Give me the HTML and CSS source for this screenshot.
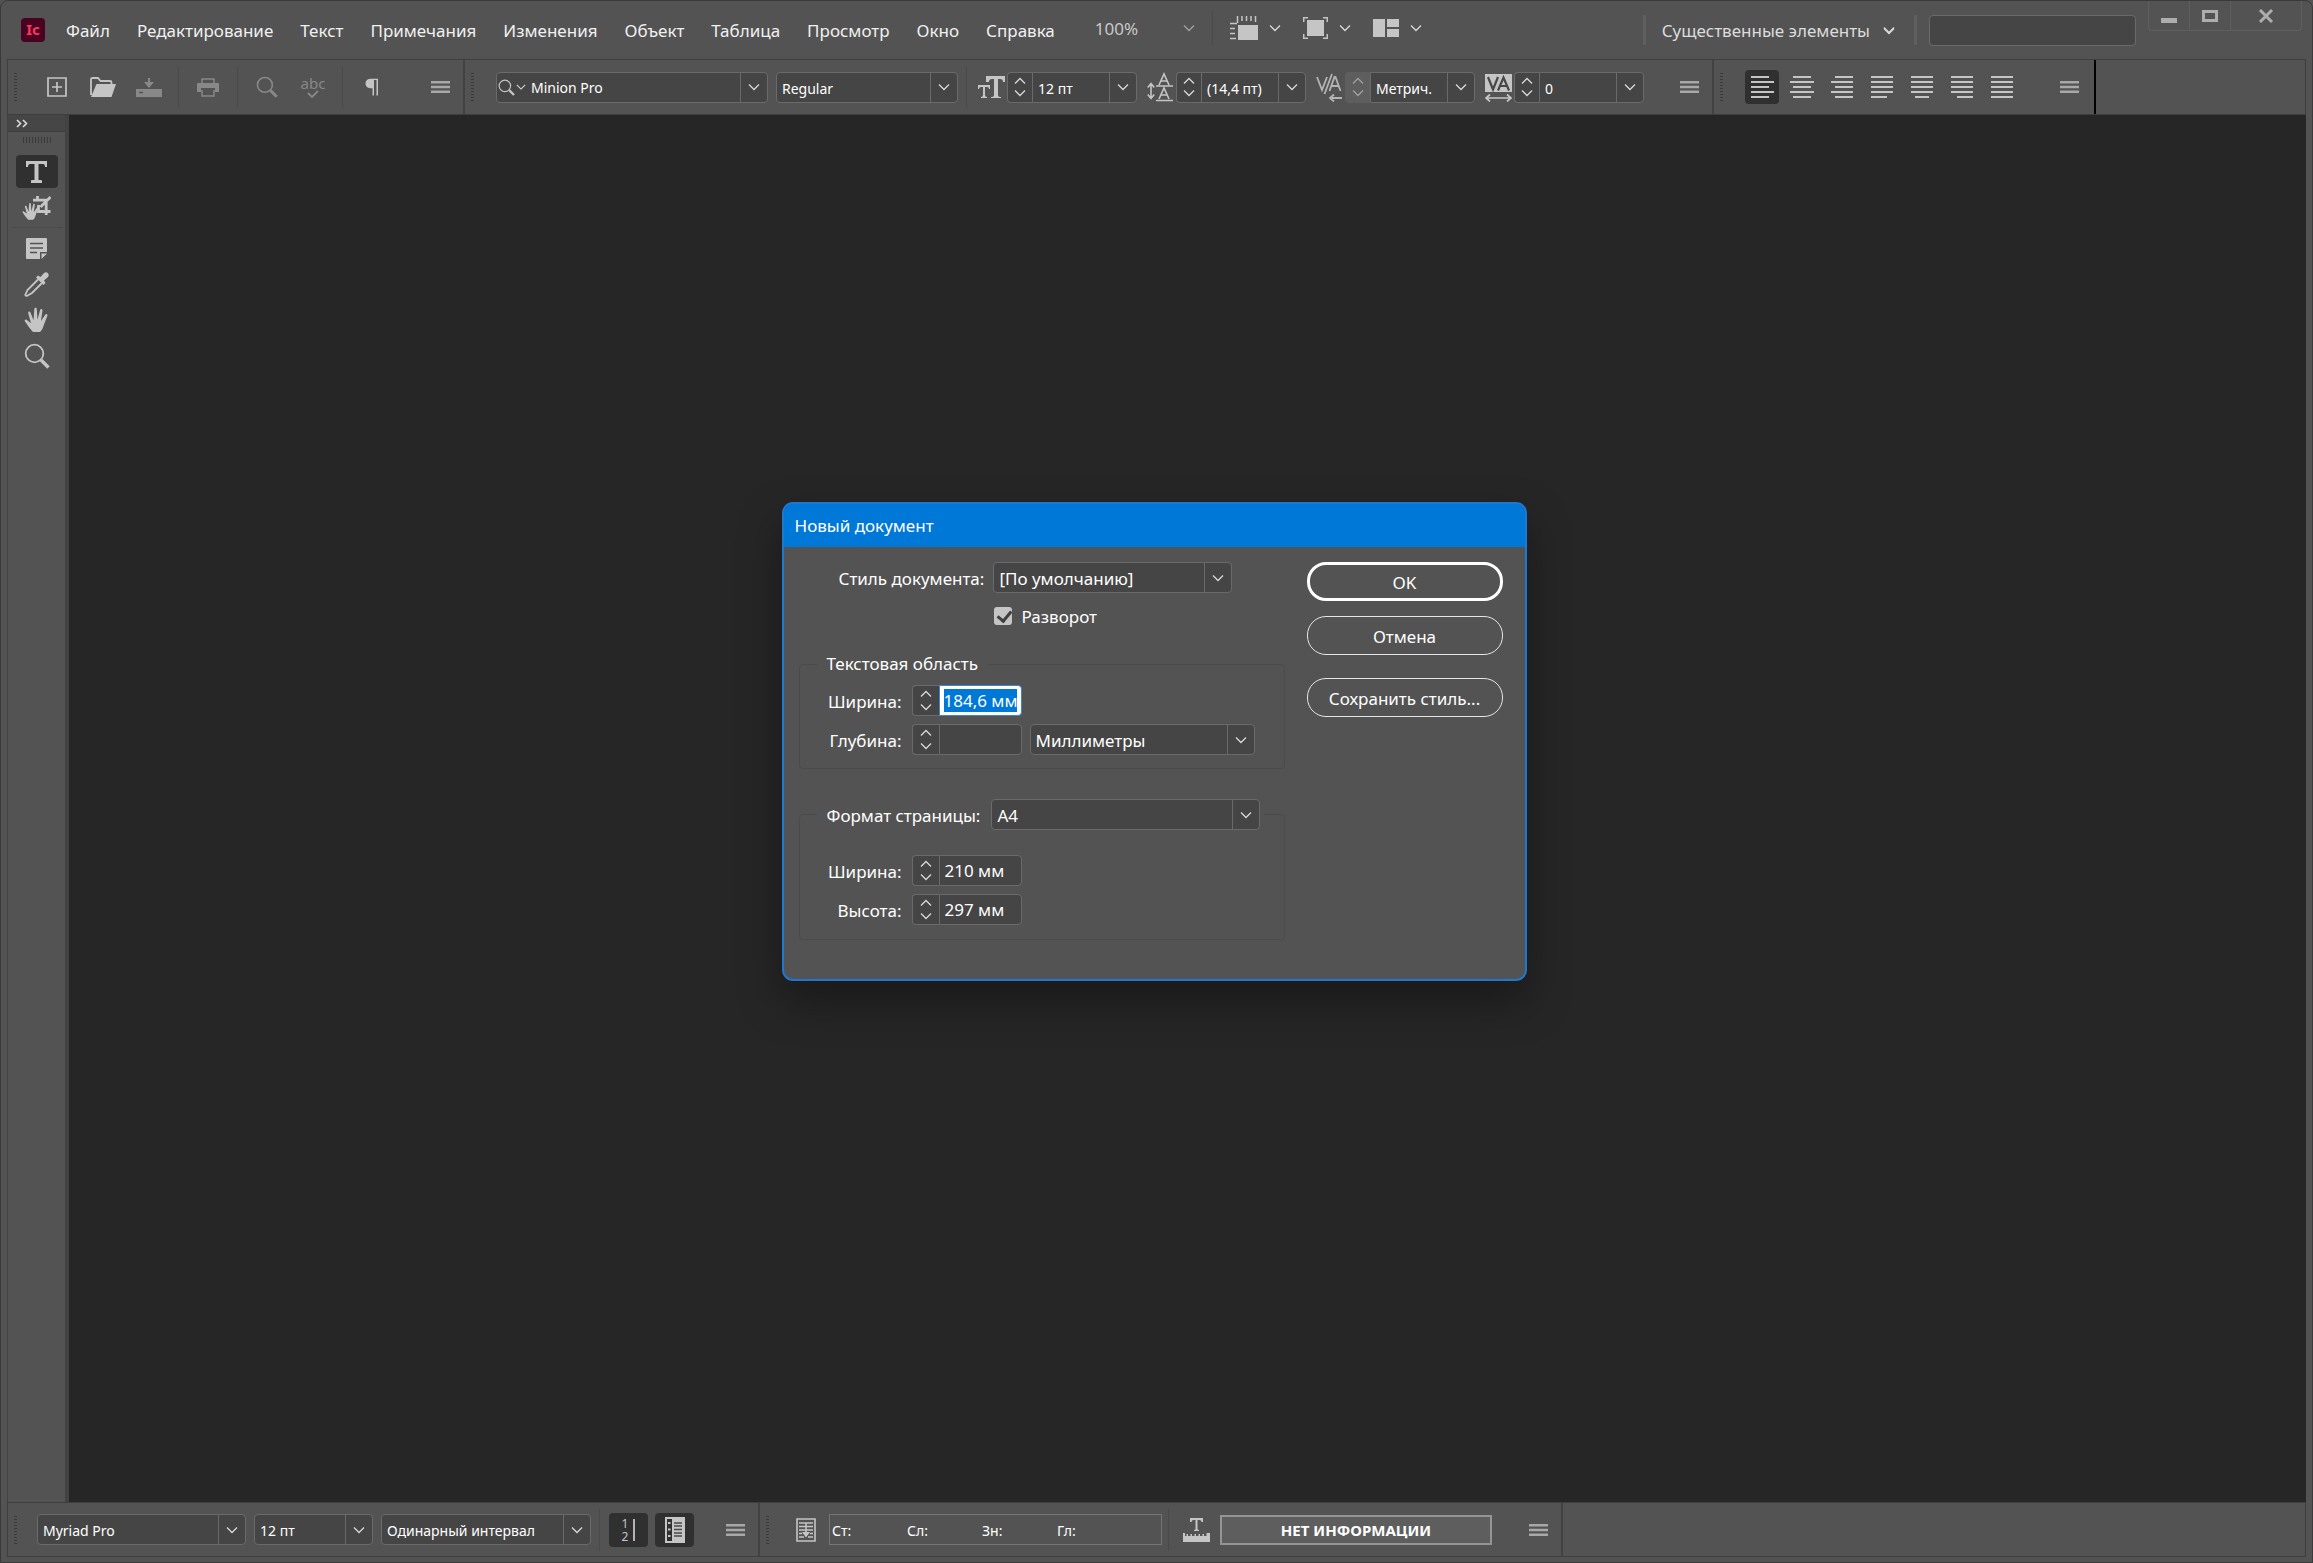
FILE: index.html
```
<!DOCTYPE html>
<html lang="ru">
<head>
    <meta charset="UTF-8">
    <meta name="viewport" content="width=device-width, initial-scale=1.0">
    <title>Новый документ</title>
    <link rel="stylesheet" href="styles.css">
</head>
<body>

    <!-- Общие значки -->
    <svg class="sprite" aria-hidden="true">
        <symbol id="down" viewBox="0 0 12 8"><path d="M1 1.5l5 5 5-5" fill="none" stroke="currentColor" stroke-width="1.3"/></symbol>
        <symbol id="up" viewBox="0 0 12 8"><path d="M1 6.5l5-5 5 5" fill="none" stroke="currentColor" stroke-width="1.3"/></symbol>
        <symbol id="lines" viewBox="0 0 20 14"><path d="M0 2h20M0 7h20M0 12h20" stroke="currentColor" stroke-width="2.4"/></symbol>
        <symbol id="zoom" viewBox="0 0 26 26"><circle cx="10.5" cy="10.5" r="8.8" fill="none" stroke="currentColor" stroke-width="1.8"/><path d="M17 17l7.5 7.5" stroke="currentColor" stroke-width="3.4"/></symbol>
        <symbol id="hand" viewBox="0 0 26 26"><path d="M9 25C6.500 22.500 3.500 18 1 14.500c-.9-1.400.6-2.500 1.900-1.500L7 16.200 4.200 6.200c-.4-1.700 1.700-2.300 2.300-.7l3 7.700L10.300 2.200c.1-1.800 2.400-1.800 2.500 0l.7 10.600 2.600-9.900c.5-1.700 2.700-1.100 2.400.6L17 14l4.200-6.200c1-1.500 2.900-.3 2.100 1.300L19.800 18c-.8 3-1.800 5.300-3.800 7z" fill="currentColor"/></symbol>
    </svg>

    <div class="app">
        <header class="menubar">
            <svg class="logo" viewBox="0 0 24 24"><rect width="24" height="24" rx="4" fill="#49021f"/><text x="12" y="17" text-anchor="middle">Ic</text></svg>
            <nav class="menu">
                <a href="#">Файл</a>
                <a href="#">Редактирование</a>
                <a href="#">Текст</a>
                <a href="#">Примечания</a>
                <a href="#">Изменения</a>
                <a href="#">Объект</a>
                <a href="#">Таблица</a>
                <a href="#">Просмотр</a>
                <a href="#">Окно</a>
                <a href="#">Справка</a>
            </nav>
            <div class="view-tools">
                <button class="zoom-level">100% <svg class="chevron"><use href="#down"/></svg></button>
                <span class="sep"></span>
                <button class="view-btn" aria-label="Линейки">
                    <svg width="28" height="24" viewBox="0 0 28 24"><path d="M8 9h20v15H8z" fill="#c5c5c5"/><path d="M7.500 0v7M12 0v5M16.500 0v5M21 0v5M25.500 0v6M0 7.500h7M0 12.500h5M0 17.500h5M0 22.500h6" stroke="#c5c5c5" stroke-width="1.5"/></svg>
                    <svg class="chevron"><use href="#down"/></svg>
                </button>
                <button class="view-btn" aria-label="Режим экрана">
                    <svg width="25" height="22" viewBox="0 0 25 22"><path d="M4 3h17v16H4z" fill="#c5c5c5"/><path d="M.7 5V.7H5M20 .7h4.300V5M.7 17v4.300H5M20 21.300h4.300V17" fill="none" stroke="#c5c5c5" stroke-width="1.5"/></svg>
                    <svg class="chevron"><use href="#down"/></svg>
                </button>
                <button class="view-btn" aria-label="Упорядочить документы">
                    <svg width="26" height="18" viewBox="0 0 26 18"><path d="M0 0h12v18H0zM14 0h12v8H14zM14 10h12v8H14z" fill="#c5c5c5"/></svg>
                    <svg class="chevron"><use href="#down"/></svg>
                </button>
            </div>
            <div class="workspace">
                <span class="bar"></span>
                <button class="workspace-btn">Существенные элементы <svg class="chevron bold"><use href="#down"/></svg></button>
                <span class="bar"></span>
                <input class="search" type="text" aria-label="Поиск">
            </div>
            <div class="window-buttons">
                <button aria-label="Свернуть"><svg width="16" height="14"><path d="M0 9h16v5H0z" fill="#adadad"/></svg></button>
                <button aria-label="Развернуть"><svg width="16" height="14"><path d="M1.500 2.500h13v9h-13z" fill="none" stroke="#adadad" stroke-width="3"/></svg></button>
                <button class="close" aria-label="Закрыть"><svg width="16" height="14"><path d="M2 1l12 12M14 1L2 13" stroke="#adadad" stroke-width="3"/></svg></button>
            </div>
        </header>

        <!-- Панель управления -->
        <div class="toolbar">
            <div class="group">
                <span class="grip"></span>
                <button class="tool" aria-label="Новый"><svg width="20" height="20" viewBox="0 0 20 20"><path d="M1 1h18v18H1zM10 5v10M5 10h10" fill="none" stroke="#c5c5c5" stroke-width="1.700"/></svg></button>
                <button class="tool" aria-label="Открыть"><svg width="26" height="20" viewBox="0 0 26 20"><path d="M1 18V2.500Q1 1 2.500 1H8l2.500 3H20q1.500 0 1.500 1.500V7" fill="none" stroke="#c5c5c5" stroke-width="1.800"/><path d="M6.500 7H26l-4.500 13H1z" fill="#c5c5c5"/></svg></button>
                <button class="tool dim" aria-label="Сохранить"><svg width="26" height="19" viewBox="0 0 26 19"><path d="M0 11h26v8H0zM12 0h2v4h4l-5 6-5-6h4z" fill="currentColor"/><path d="M3 14.500h4" stroke="#535353" stroke-width="1.500"/></svg></button>
                <span class="sep"></span>
                <button class="tool dim" aria-label="Печать"><svg width="22" height="19" viewBox="0 0 22 19"><path d="M5 6V1h12v5M5 12v6h12v-6" fill="none" stroke="currentColor" stroke-width="1.500"/><path d="M1 5h20q1 0 1 1v8h-4v-4H4v4H0V6q0-1 1-1z" fill="currentColor"/></svg></button>
                <span class="sep"></span>
                <button class="tool dim" aria-label="Найти"><svg width="22" height="22"><use href="#zoom"/></svg></button>
                <button class="tool dim spell" aria-label="Проверка орфографии"><span>abc</span><svg width="12" height="8" viewBox="0 0 12 8"><path d="M1 3l4 4 6-6" fill="none" stroke="currentColor" stroke-width="1.800"/></svg></button>
                <span class="sep"></span>
                <button class="tool" aria-label="Непечатаемые символы"><svg width="14" height="18" viewBox="0 0 14 18"><path d="M13 17.500V.8H6C2.500.8.500 2.500.500 5.500s2 4.700 5.500 4.700h1.500v7.300H9V2h2.500v15.500z" fill="#c5c5c5"/></svg></button>
                <button class="tool last" aria-label="Меню"><svg width="19" height="14"><use href="#lines"/></svg></button>
            </div>

            <div class="group">
                <span class="grip"></span>
                <span class="combo font-family">
                    <svg class="find" width="17" height="19"><use href="#zoom"/></svg><svg class="chevron small"><use href="#down"/></svg>
                    <select aria-label="Шрифт"><option>Minion Pro</option></select>
                    <span class="arrow"><svg class="chevron"><use href="#down"/></svg></span>
                </span>
                <span class="combo font-style">
                    <select aria-label="Начертание"><option>Regular</option></select>
                    <span class="arrow"><svg class="chevron"><use href="#down"/></svg></span>
                </span>
                <span class="sep"></span>
                <div class="metrics">
                    <div class="metric">
                        <svg width="27" height="30" viewBox="0 0 27 30"><g fill="#c5c5c5"><path d="M8 4h19v6h-2q0-3-3-3h-2v16q0 2 3 2v1H13v-1q3 0 3-2V7h-2q-3 0-3 3H8z"/><path d="M0 13h12v4h-1q0-2-2-2H7v8q0 2 2 2v1H3v-1q2 0 2-2v-8H3q-2 0-2 2H0z"/></g></svg>
                        <span class="spin"><button aria-label="Больше"><svg class="chevron"><use href="#up"/></svg></button><button aria-label="Меньше"><svg class="chevron"><use href="#down"/></svg></button></span><span class="combo joined">
                            <select aria-label="Кегль"><option>12 пт</option></select>
                            <span class="arrow"><svg class="chevron"><use href="#down"/></svg></span>
                        </span>
                    </div>
                    <div class="metric">
                        <svg width="27" height="30" viewBox="0 0 27 30"><path d="M9 14h17M9 28.500h17M12 13l5-11 5 11M13.500 9h7M12 27l5-11 5 11M13.500 23h7M4 12v14M.8 15.500L4 11.500l3.200 4M.8 22.500L4 26.500l3.200-4" fill="none" stroke="#c5c5c5" stroke-width="1.600"/></svg>
                        <span class="spin"><button aria-label="Больше"><svg class="chevron"><use href="#up"/></svg></button><button aria-label="Меньше"><svg class="chevron"><use href="#down"/></svg></button></span><span class="combo joined">
                            <select aria-label="Интерлиньяж"><option>(14,4 пт)</option></select>
                            <span class="arrow"><svg class="chevron"><use href="#down"/></svg></span>
                        </span>
                    </div>
                    <div class="metric">
                        <svg width="27" height="30" viewBox="0 0 27 30"><path d="M1 5l5 13 5-13M8.500 22L16 2M13.500 19l5-14h1l5 14M15.500 14h7M14 26h12M18 22.500L14 26l4 3.500" fill="none" stroke="#b4b4b4" stroke-width="1.800"/></svg>
                        <span class="spin off"><button aria-label="Больше"><svg class="chevron"><use href="#up"/></svg></button><button aria-label="Меньше"><svg class="chevron"><use href="#down"/></svg></button></span><span class="combo joined">
                            <select aria-label="Кернинг"><option>Метрич.</option></select>
                            <span class="arrow"><svg class="chevron"><use href="#down"/></svg></span>
                        </span>
                    </div>
                    <div class="metric">
                        <svg width="27" height="30" viewBox="0 0 27 30"><path d="M0 2h27v18H0z" fill="#c5c5c5"/><path d="M3 5l5 12.500L13 5M13 18.500l5.500-13 5.500 13M15 14h7" fill="none" stroke="#484848" stroke-width="2.200"/><path d="M1 26h25M5 22.500L1 26l4 3.500M22 22.500l4 3.500-4 3.500" fill="none" stroke="#c5c5c5" stroke-width="1.700"/></svg>
                        <span class="spin"><button aria-label="Больше"><svg class="chevron"><use href="#up"/></svg></button><button aria-label="Меньше"><svg class="chevron"><use href="#down"/></svg></button></span><span class="combo joined">
                            <select aria-label="Трекинг"><option>0</option></select>
                            <span class="arrow"><svg class="chevron"><use href="#down"/></svg></span>
                        </span>
                    </div>
                </div>
                <button class="tool last" aria-label="Меню"><svg width="19" height="14"><use href="#lines"/></svg></button>
            </div>

            <div class="group align-group">
                <span class="grip"></span>
                <div class="align">
                    <button class="active" aria-label="По левому краю"><svg width="24" height="24" viewBox="0 0 24 24"><path d="M1 2h18M1 7h23M1 12h18M1 17h23M1 22h18"/></svg></button>
                    <button aria-label="По центру"><svg width="24" height="24" viewBox="0 0 24 24"><path d="M3 2h18M0 7h24M3 12h18M0 17h24M3 22h18"/></svg></button>
                    <button aria-label="По правому краю"><svg width="24" height="24" viewBox="0 0 24 24"><path d="M5 2h18M1 7h22M5 12h18M1 17h22M5 22h18"/></svg></button>
                    <button aria-label="По ширине, последняя влево"><svg width="24" height="24" viewBox="0 0 24 24"><path d="M1 2h22M1 7h22M1 12h22M1 17h22M1 22h16"/></svg></button>
                    <button aria-label="По ширине, последняя по центру"><svg width="24" height="24" viewBox="0 0 24 24"><path d="M1 2h22M1 7h22M1 12h22M1 17h22M5 22h14"/></svg></button>
                    <button aria-label="По ширине, последняя вправо"><svg width="24" height="24" viewBox="0 0 24 24"><path d="M1 2h22M1 7h22M1 12h22M1 17h22M7 22h16"/></svg></button>
                    <button aria-label="По ширине"><svg width="24" height="24" viewBox="0 0 24 24"><path d="M1 2h22M1 7h22M1 12h22M1 17h22M1 22h22"/></svg></button>
                </div>
                <button class="tool last" aria-label="Меню"><svg width="19" height="14"><use href="#lines"/></svg></button>
            </div>
        </div>

        <div class="workarea">
            <aside class="sidebar">
                <button class="expand" aria-label="Развернуть панель"><svg width="12" height="9" viewBox="0 0 12 9"><path d="M1 1l3.500 3.500L1 8M7 1l3.500 3.500L7 8" fill="none" stroke="#dcdcdc" stroke-width="1.600"/></svg></button>
                <span class="grip-h"></span>
                <button class="side-tool active" aria-label="Текст"><svg width="21" height="22" viewBox="0 0 21 22"><path d="M0 0h21v6h-2q0-3-2-3h-4.500v16H15q1 0 1 1v2H5v-2q0-1 1-1h2.500V3H4Q2 3 2 6H0z" fill="#c5c5c5"/></svg></button>
                <button class="side-tool" aria-label="Монтажная область"><svg width="29" height="25" viewBox="0 0 29 25"><g fill="none" stroke="#c5c5c5" stroke-width="2.800"><path d="M15.500 0v5M11 4.200h13.200V19M16.500 9v6.500h12M28.500 1l-10 10" /></g><svg x="0" y="6" width="18" height="19"><use href="#hand"/></svg></svg></button>
                <span class="side-sep"></span>
                <button class="side-tool" aria-label="Примечание"><svg width="21" height="21" viewBox="0 0 21 21"><path d="M1 0h19q1 0 1 1v13h-7v7H1q-1 0-1-1V1q0-1 1-1zM15.500 15.500H21L15.500 21z" fill="#c5c5c5"/><path d="M4 5.500h13M4 10h13M4 14.500h7" stroke="#535353" stroke-width="1.600"/></svg></button>
                <button class="side-tool" aria-label="Пипетка"><svg width="25" height="25" viewBox="0 0 25 25"><path d="M14 7.500L3.500 18 1.300 23q.7 1.200 2 .7L8 21 18 11" fill="none" stroke="#c5c5c5" stroke-width="1.800"/><path d="M12 5.500l2-2 2.500 1.500 3.500-4q2-1.500 3.800 0 1.600 2 .2 4L20 8.500l1.500 2.500-2 2z" fill="#c5c5c5"/></svg></button>
                <button class="side-tool" aria-label="Рука"><svg width="26" height="26"><use href="#hand"/></svg></button>
                <button class="side-tool" aria-label="Масштаб"><svg width="26" height="26"><use href="#zoom"/></svg></button>
            </aside>
            <main class="canvas"></main>
        </div>

        <!-- Нижняя панель -->
        <footer class="toolbar bottom">
            <div class="group">
                <span class="grip"></span>
                <span class="combo galley-font">
                    <select aria-label="Шрифт гранок"><option>Myriad Pro</option></select>
                    <span class="arrow"><svg class="chevron"><use href="#down"/></svg></span>
                </span>
                <span class="combo galley-size">
                    <select aria-label="Кегль гранок"><option>12 пт</option></select>
                    <span class="arrow"><svg class="chevron"><use href="#down"/></svg></span>
                </span>
                <span class="combo galley-leading">
                    <select aria-label="Интервал"><option>Одинарный интервал</option></select>
                    <span class="arrow"><svg class="chevron"><use href="#down"/></svg></span>
                </span>
                <span class="sep"></span>
                <button class="toggle" aria-label="Номера строк">
                    <span class="digits"><span>1</span><span>2</span></span>
                    <svg width="2" height="22"><path d="M0 0h2v22H0z" fill="#b4b4b4"/></svg>
                </button>
                <button class="toggle" aria-label="Столбец стилей"><svg width="20" height="26" viewBox="0 0 20 26"><rect x="1" y="1" width="18" height="24" fill="#303030" stroke="#c5c5c5" stroke-width="2"/><path d="M7 1h12v24H7z" fill="#c5c5c5"/><path d="M9 6h8M9 9h8M9 12.500h8M9 16h8M9 19h8" stroke="#4a4a4a" stroke-width="1.300"/><path d="M3 6h2.500M3 12.500h2.500M3 19h2.500" stroke="#c5c5c5" stroke-width="2"/></svg></button>
                <button class="tool last" aria-label="Меню"><svg width="19" height="14"><use href="#lines"/></svg></button>
            </div>
            <div class="group info-group">
                <span class="grip"></span>
                <button class="tool refresh" aria-label="Обновить сведения"><svg width="20" height="24" viewBox="0 0 20 24"><path d="M1 1h18v22H1z" fill="none" stroke="#c5c5c5" stroke-width="1.600"/><path d="M3 5h14M3 8.500h14M3 12h14M3 15.500h3M14 15.500h3M3 19h5M12 19h5M10 5v10" stroke="#c5c5c5" stroke-width="1.500"/><path d="M6 14h8l-4 5.500z" fill="#c5c5c5"/></svg></button>
                <div class="position">
                    <span>Ст:</span><span>Сл:</span><span>Зн:</span><span>Гл:</span>
                </div>
                <span class="sep"></span>
                <svg class="ruler" width="27" height="24" viewBox="0 0 27 24"><path d="M7 0h13v4h-1.500q0-2-2-2h-2v9q0 1 1.500 1v1h-5v-1q1.500 0 1.500-1V2h-2q-2 0-2 2H7zM0 15h2v3h1.500v-2h1.500v2h2.500v-2H9v2h2.500v-2H13v2h2.500v-2H17v2h2.500v-2H21v2h2.500v-3H27v9H0z" fill="#c5c5c5"/></svg>
                <div class="fit-info">НЕТ ИНФОРМАЦИИ</div>
                <button class="tool last" aria-label="Меню"><svg width="19" height="14"><use href="#lines"/></svg></button>
            </div>
        </footer>
    </div>

    <!-- Диалог нового документа -->
    <form class="dialog" role="dialog" aria-labelledby="dialogTitle">
        <h1 id="dialogTitle">Новый документ</h1>
        <div class="dialog-body">
            <div class="settings">
                <div class="row style-row">
                    <label for="preset">Стиль документа:</label>
                    <span class="combo">
                        <select id="preset"><option>[По умолчанию]</option></select>
                        <span class="arrow"><svg class="chevron"><use href="#down"/></svg></span>
                    </span>
                </div>
                <div class="row check-row">
                    <input type="checkbox" id="facing" checked>
                    <label for="facing">Разворот</label>
                </div>

                <fieldset class="text-area">
                    <legend>Текстовая область</legend>
                    <div class="row">
                        <label for="areaWidth">Ширина:</label>
                        <span class="spin"><button type="button" aria-label="Больше"><svg class="chevron"><use href="#up"/></svg></button><button type="button" aria-label="Меньше"><svg class="chevron"><use href="#down"/></svg></button></span><input class="value" type="text" id="areaWidth" value="184,6 мм">
                    </div>
                    <div class="row">
                        <label for="areaDepth">Глубина:</label>
                        <span class="spin"><button type="button" aria-label="Больше"><svg class="chevron"><use href="#up"/></svg></button><button type="button" aria-label="Меньше"><svg class="chevron"><use href="#down"/></svg></button></span><input class="value" type="text" id="areaDepth">
                        <span class="combo units">
                            <select aria-label="Единицы"><option>Миллиметры</option></select>
                            <span class="arrow"><svg class="chevron"><use href="#down"/></svg></span>
                        </span>
                    </div>
                </fieldset>

                <fieldset class="page-size">
                    <legend>
                        <label for="pageSize">Формат страницы:</label>
                        <span class="combo">
                            <select id="pageSize"><option>A4</option></select>
                            <span class="arrow"><svg class="chevron"><use href="#down"/></svg></span>
                        </span>
                    </legend>
                    <div class="row">
                        <label for="pageWidth">Ширина:</label>
                        <span class="spin"><button type="button" aria-label="Больше"><svg class="chevron"><use href="#up"/></svg></button><button type="button" aria-label="Меньше"><svg class="chevron"><use href="#down"/></svg></button></span><input class="value" type="text" id="pageWidth" value="210 мм">
                    </div>
                    <div class="row">
                        <label for="pageHeight">Высота:</label>
                        <span class="spin"><button type="button" aria-label="Больше"><svg class="chevron"><use href="#up"/></svg></button><button type="button" aria-label="Меньше"><svg class="chevron"><use href="#down"/></svg></button></span><input class="value" type="text" id="pageHeight" value="297 мм">
                    </div>
                </fieldset>
            </div>
            <div class="actions">
                <button type="button" class="primary">OK</button>
                <button type="button">Отмена</button>
                <button type="button" class="save-style">Сохранить стиль...</button>
            </div>
        </div>
    </form>

    <script>
        // Ширина выделена сразу после открытия диалога
        const areaWidth = document.getElementById('areaWidth');
        areaWidth.focus();
        areaWidth.select();
    </script>
</body>
</html>
```
FILE: styles.css
```
/* Общие стили */
* {
    box-sizing: border-box;
}

body {
    margin: 0;
    min-height: 100vh;
    background: #535353;
    color: #f0f0f0;
    font-family: 'Noto Sans', sans-serif;
    font-size: 14px;
    overflow: hidden;
}

button, select, input {
    margin: 0;
    padding: 0;
    border: none;
    background: none;
    color: inherit;
    font: inherit;
}

svg {
    display: block;
    flex: none;
}

.sprite {
    position: absolute;
    width: 0;
    height: 0;
}

.app {
    display: flex;
    flex-direction: column;
    height: 100vh;
    padding: 0 6px;
    border: 1px solid #3a3a3a;
    border-radius: 8px 8px 0 0;
}

.chevron {
    width: 12px;
    height: 8px;
    color: #d8d8d8;
}

.sep {
    width: 1px;
    height: 42px;
    margin: 0 6px;
    background: #4a4a4a;
}

/* Строка меню */
.menubar {
    display: flex;
    align-items: center;
    height: 58px;
    padding-left: 14px;
    font-size: 17px;
}

.logo {
    width: 24px;
    height: 24px;
}

.logo text {
    fill: #ff3366;
    font-size: 15px;
    font-weight: bold;
}

.menu {
    display: flex;
    gap: 27px;
    margin-left: 21px;
}

.menu a {
    color: #f0f0f0;
    text-decoration: none;
}

.view-tools {
    display: flex;
    align-items: center;
    margin-left: 40px;
    padding-bottom: 4px;
}

.view-tools .sep {
    height: 36px;
    margin: 0 17px;
}

.zoom-level {
    display: flex;
    align-items: center;
    justify-content: space-between;
    width: 100px;
    color: #c8c8c8;
}

.zoom-level .chevron {
    color: #a0a0a0;
}

.view-btn {
    display: flex;
    align-items: center;
    gap: 11px;
    margin-right: 22px;
}

.workspace {
    display: flex;
    align-items: center;
    margin-left: auto;
}

.bar {
    width: 3px;
    height: 30px;
    background: #5f5f5f;
}

.workspace-btn {
    display: flex;
    align-items: center;
    gap: 13px;
    margin: 0 19px 0 16px;
    color: #dcdcdc;
}

.chevron.bold {
    filter: drop-shadow(0 1px 0 #dcdcdc);
}

.search {
    width: 207px;
    height: 31px;
    margin-left: 12px;
    border: 1px solid #6a6a6a;
    border-radius: 4px;
    background: #454545;
}

.window-buttons {
    display: flex;
    align-self: flex-start;
    margin: 0 4px 0 12px;
    border: 1px solid #5f5f5f;
    border-top: none;
    border-radius: 0 0 4px 4px;
}

.window-buttons button {
    display: flex;
    align-items: center;
    justify-content: center;
    width: 41px;
    height: 29px;
    border-right: 1px solid #5f5f5f;
}

.window-buttons .close {
    width: 70px;
    border-right: none;
}

/* Панели инструментов */
.toolbar {
    display: flex;
    height: 56px;
    border: 1px solid #3e3e3e;
}

.group {
    display: flex;
    align-items: center;
    padding-left: 6px;
    border-right: 2px solid #424242;
}

.grip {
    width: 3px;
    height: 28px;
    margin-right: 17px;
    background: repeating-linear-gradient(#3a3a3a 0 1px, transparent 1px 3px);
}

.tool {
    display: flex;
    align-items: center;
    justify-content: center;
    width: 46px;
    height: 34px;
    color: #a8a8a8;
}

.tool.dim {
    color: #888888;
}

.tool.last {
    margin-left: 22px;
}

.tool.spell {
    flex-direction: column;
    font-size: 15px;
    line-height: 14px;
}

.align-group {
    border-right-color: #000000;
}

/* Выпадающие списки и счётчики */
.combo {
    display: flex;
    align-items: center;
    height: 31px;
    border: 1px solid #6a6a6a;
    border-radius: 4px;
    background: #454545;
    color: #ffffff;
}

.combo select {
    flex: 1;
    min-width: 0;
    height: 100%;
    padding: 2px 0 0 5px;
    appearance: none;
    outline: none;
}

.combo .arrow {
    display: flex;
    align-items: center;
    justify-content: center;
    width: 27px;
    height: 100%;
    border-left: 1px solid #6a6a6a;
}

.combo.joined {
    width: 105px;
    border-radius: 0 4px 4px 0;
}

.spin {
    display: flex;
    flex-direction: column;
    justify-content: space-evenly;
    width: 25px;
    height: 31px;
    border: 1px solid #6a6a6a;
    border-right: none;
    border-radius: 4px 0 0 4px;
    background: #454545;
}

.spin button {
    display: flex;
    justify-content: center;
}

.spin.off {
    background: #5e5e5e;
    border-color: #5e5e5e;
}

.spin.off .chevron {
    color: #a0a0a0;
}

.font-family {
    width: 272px;
    margin-left: 5px;
}

.combo.font-family select {
    padding-top: 0;
}

.chevron.small {
    width: 10px;
    margin-left: 1px;
}

.find {
    margin-left: 1px;
    color: #c5c5c5;
}

.font-style {
    width: 182px;
    margin: 0 2px 0 8px;
}

.metrics {
    display: flex;
    gap: 10px;
    margin-left: 5px;
}

.metric {
    display: flex;
    align-items: center;
}

.metric > svg {
    margin-right: 2px;
}

.align {
    display: flex;
    gap: 6px;
    margin-left: 5px;
}

.align button {
    display: flex;
    align-items: center;
    justify-content: center;
    width: 34px;
    height: 34px;
    border-radius: 4px;
}

.align svg {
    stroke: #c5c5c5;
    stroke-width: 2;
}

.align .active, .toggle {
    background: #303030;
}

.align-group .tool.last {
    margin: 0 2px 0 27px;
}

/* Рабочая область */
.workarea {
    flex: 1;
    display: flex;
    min-height: 0;
}

.sidebar {
    display: flex;
    flex-direction: column;
    align-items: center;
    width: 62px;
    border: solid #424242;
    border-width: 0 4px 0 1px;
    color: #c5c5c5;
}

.expand {
    width: 100%;
    height: 17px;
    padding: 0 0 0 8px;
    border-bottom: 1px solid #3e3e3e;
    background: #464646;
}

.grip-h {
    width: 28px;
    height: 6px;
    margin: 5px 0 12px;
    background: repeating-linear-gradient(90deg, #3a3a3a 0 1px, transparent 1px 3px);
}

.side-tool {
    display: flex;
    align-items: center;
    justify-content: center;
    width: 42px;
    height: 36px;
}

.side-tool.active {
    height: 33px;
    margin-bottom: 2px;
    border-radius: 4px;
    background: #303030;
}

.side-sep {
    width: 52px;
    height: 1px;
    margin: 1px 0 2px;
    background: #4a4a4a;
}

.canvas {
    flex: 1;
    background: #262626;
}

/* Нижняя панель */
.toolbar.bottom {
    height: 55px;
    margin-bottom: 5px;
}

.bottom .combo {
    margin-right: 8px;
}

.galley-font {
    width: 209px;
    margin-left: 3px;
}

.galley-size {
    width: 119px;
}

.galley-leading {
    width: 210px;
}

.bottom .galley-leading {
    margin-right: 2px;
}

.toggle {
    display: flex;
    align-items: center;
    justify-content: center;
    gap: 5px;
    width: 39px;
    height: 34px;
    margin: 0 4px 0 3px;
    border-radius: 4px;
}

.digits {
    display: flex;
    flex-direction: column;
    color: #c5c5c5;
    font-size: 12px;
    line-height: 13px;
}

.bottom .tool.last {
    margin-left: 14px;
}

.refresh {
    width: 40px;
    margin-right: 3px;
}

.position {
    display: flex;
    align-items: center;
    width: 333px;
    height: 31px;
    padding-top: 2px;
    border: 1px solid #757575;
    color: #ffffff;
}

.position span {
    width: 75px;
    padding-left: 2px;
}

.ruler {
    margin-left: 8px;
}

.fit-info {
    width: 272px;
    height: 30px;
    margin-left: 10px;
    border: 2px solid #949494;
    background: #5e5e5e;
    color: #ffffff;
    font-size: 15px;
    font-weight: bold;
    line-height: 26px;
    text-align: center;
}

.info-group .tool.last {
    margin-left: 23px;
}

/* Диалог */
.dialog {
    position: absolute;
    top: 502px;
    left: calc(50% - 375px);
    width: 745px;
    border: 2px solid #1f78d0;
    border-radius: 11px;
    background: #535353;
    box-shadow: 0 20px 44px rgba(0, 0, 0, 0.35);
    color: #ffffff;
    font-size: 17px;
    line-height: 22px;
}

.dialog h1 {
    margin: 0;
    padding: 10px 11px;
    border-radius: 8px 8px 0 0;
    background: #0078d7;
    font-size: 17px;
    font-weight: normal;
    line-height: 23px;
}

.dialog-body {
    display: flex;
    justify-content: space-between;
    padding: 15px 22px 39px 15px;
}

.settings {
    width: 486px;
}

.row {
    display: flex;
    align-items: center;
}

.dialog label {
    padding-top: 2px;
}

.style-row {
    padding-left: 40px;
}

.style-row .combo {
    width: 239px;
    margin-left: 9px;
}

.check-row {
    gap: 10px;
    height: 22px;
    margin: 12px 0 0 195px;
}

.check-row input {
    width: 18px;
    height: 18px;
    appearance: none;
    border-radius: 3px;
    background: #c5c5c5;
}

/* Галочка */
.check-row input:checked::before {
    content: "";
    display: block;
    width: 6px;
    height: 11px;
    margin: 1px 0 0 6px;
    border: solid #404040;
    border-width: 0 3px 3px 0;
    transform: rotate(40deg);
}

fieldset {
    min-width: 0;
    margin: 0;
    border: 1px solid #4b4b4b;
    border-radius: 4px;
}

legend {
    padding: 0 10px;
}

fieldset .row {
    margin-bottom: 8px;
}

fieldset .row label {
    width: 102px;
    margin-right: 10px;
    text-align: right;
}

.text-area {
    margin-top: 26px;
    padding: 10px 0 5px;
}

.text-area legend {
    margin-left: 17px;
}

.page-size {
    margin-top: 30px;
    padding: 25px 0 6px;
}

.page-size legend {
    display: flex;
    align-items: center;
    margin-left: 17px;
    padding-right: 4px;
}

.page-size legend .combo {
    width: 269px;
    margin-left: 11px;
}

.dialog .spin {
    width: 27px;
}

.value {
    width: 83px;
    height: 31px;
    padding-left: 5px;
    border: 1px solid #6a6a6a;
    border-radius: 0 4px 4px 0;
    background: #454545;
    outline: none;
}

.value:focus {
    padding: 3px 4px;
    border-color: #3a84d8;
    background: #ffffff;
    color: #000000;
}

.value::selection {
    background: #0078d7;
    color: #ffffff;
}

.units {
    width: 225px;
    margin-left: 8px;
}

.actions {
    display: flex;
    flex-direction: column;
    gap: 15px;
    width: 196px;
}

.actions button {
    height: 39px;
    padding-top: 2px;
    border: 1px solid #e6e6e6;
    border-radius: 19px;
}

.actions .primary {
    border: 3px solid #ffffff;
}

.actions .save-style {
    margin-top: 8px;
}
```
